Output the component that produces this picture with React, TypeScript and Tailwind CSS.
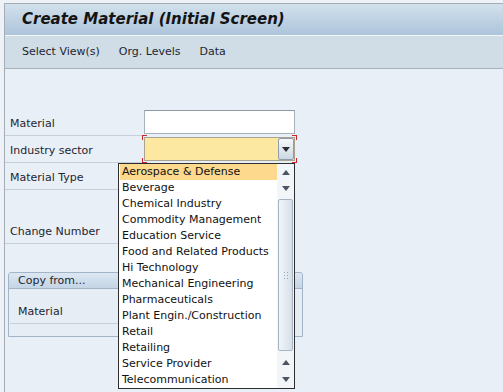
const sectors = [
  'Aerospace & Defense',
  'Beverage',
  'Chemical Industry',
  'Commodity Management',
  'Education Service',
  'Food and Related Products',
  'Hi Technology',
  'Mechanical Engineering',
  'Pharmaceuticals',
  'Plant Engin./Construction',
  'Retail',
  'Retailing',
  'Service Provider',
  'Telecommunication',
];

const Arrow = ({ up }: { up?: boolean }) => (
  <svg width="8" height="5" viewBox="0 0 8 5">
    {up ? <polygon points="0,5 8,5 4,0" fill="#4b5563" /> : <polygon points="0,0 8,0 4,5" fill="#4b5563" />}
  </svg>
);

const Corner = ({ className }: { className: string }) => (
  <span className={`absolute w-[5px] h-[5px] border-[#c8262c] ${className}`} />
);

interface RowProps {
  label?: string;
  line?: boolean;
  children?: React.ReactNode;
}

const FormRow = ({ label, line = true, children }: RowProps) => (
  <div className="flex h-[27px]">
    <div className={`w-[139px] h-[27px] pl-[5px] pt-[5px] flex items-center border-b ${line ? 'border-[#c6ced7]' : 'border-transparent'}`}>
      {label}
    </div>
    <div className="flex items-start pt-[1px]">{children}</div>
  </div>
);

export default function App() {
  return (
    <div className="relative w-[503px] h-[392px] overflow-hidden bg-[#eef1f5] pt-[3px] pl-[4px] font-['DejaVu_Sans',sans-serif] text-[11px] text-[#1e2630]">
      <div className="h-full border-l border-t border-[#a3adb7] bg-[#e9eff6] flex flex-col">
        <div className="h-[32px] bg-gradient-to-b from-[#d2e1ec] to-[#adc4db] pl-[17px] flex items-center border-b border-[#f4f7fa]">
          <span className="text-[15px] font-bold italic text-[#141414]">Create Material (Initial Screen)</span>
        </div>
        <div className="h-[33px] bg-[#d0dde7] border-b border-[#a8b2bb] pl-[17px] flex items-center gap-[19px]">
          <span>Select View(s)</span>
          <span>Org. Levels</span>
          <span>Data</span>
        </div>

        <div className="pt-[40px]">
          <FormRow label="Material">
            <div className="w-[151px] h-[24px] bg-white border border-[#a9b1ba] border-t-[#8f98a2]" />
          </FormRow>
          <FormRow label="Industry sector">
            <div className="relative w-[151px] h-[24px]">
              <div className="w-full h-full bg-[#fde8a2] border border-[#a9a48f] flex justify-end">
                <div className="w-[16px] h-full rounded-[2px] border border-[#8d9bab] bg-gradient-to-b from-[#f6f8fb] to-[#cdd8e3] flex items-center justify-center">
                  <svg width="8" height="5" viewBox="0 0 8 5"><polygon points="0,0 8,0 4,5" fill="#25303c" /></svg>
                </div>
              </div>
              <Corner className="-left-[2px] -top-[2px] border-l border-t" />
              <Corner className="-right-[2px] -top-[2px] border-r border-t" />
              <Corner className="-left-[2px] -bottom-[2px] border-l border-b" />
              <Corner className="-right-[2px] -bottom-[2px] border-r border-b" />
            </div>
          </FormRow>
          <FormRow label="Material Type" />
          <FormRow line={false} />
          <FormRow label="Change Number" />
        </div>

        <div className="ml-[3px] mt-[28px] w-[295px] h-[65px] border border-[#a2b5c8] rounded-t-[3px] bg-[#e6edf5]">
          <div className="h-[16px] pl-[9px] pt-[1px] flex items-center bg-gradient-to-b from-[#dce7f2] to-[#c4d5e6] border-b border-[#a2b5c8] rounded-t-[3px]">
            Copy from...
          </div>
          <div className="pt-[8px] pl-[1px]">
            <div className="w-[134px] h-[27px] pl-[8px] pt-[5px] flex items-center border-b border-[#c6ced7]">Material</div>
          </div>
        </div>
      </div>

      <div className="absolute left-[118px] top-[163px] w-[177px] h-[226px] border border-[#2e2e2e] bg-white flex">
        <div className="w-[158px] pl-[1px]">
          {sectors.map((s, i) => (
            <div
              key={s}
              className={`h-[16px] pl-[2px] flex items-center whitespace-nowrap text-[#111] ${i === 0 ? 'bg-[#fcd98c]' : ''}`}
            >
              {s}
            </div>
          ))}
        </div>
        <div className="flex-1 flex flex-col bg-[#f3f6f9]">
          <div className="h-[16px] flex items-center justify-center"><Arrow up /></div>
          <div className="h-[16px] flex items-center justify-center"><Arrow /></div>
          <div className="flex-1 py-[3px] px-[1px]">
            <div className="h-full rounded-[2px] border border-[#a5b3c2] bg-gradient-to-r from-[#f2f5f9] to-[#d6e0ea] flex items-center justify-center">
              <div className="grid grid-cols-2 gap-[2px]">
                {[0, 1, 2, 3, 4, 5].map((d) => (
                  <span key={d} className="w-[1px] h-[1px] bg-[#9aa6b3]" />
                ))}
              </div>
            </div>
          </div>
          <div className="h-[17px] flex items-center justify-center"><Arrow up /></div>
          <div className="h-[17px] flex items-center justify-center"><Arrow /></div>
        </div>
      </div>
    </div>
  );
}
